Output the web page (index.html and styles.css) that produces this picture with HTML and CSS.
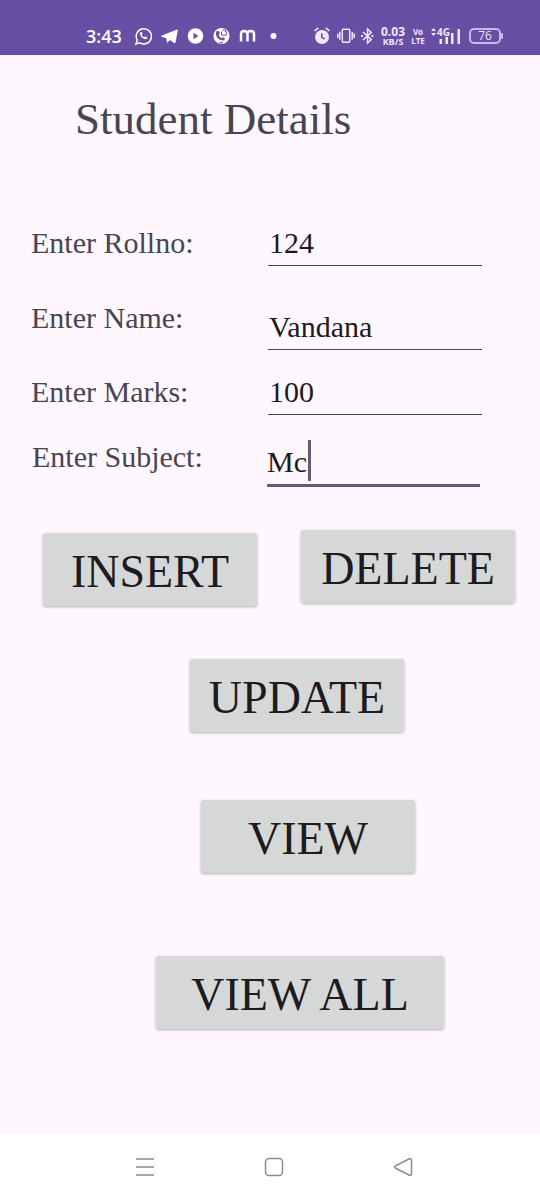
FILE: index.html
```html
<!DOCTYPE html>
<html lang="en">
<head>
<meta charset="utf-8">
<meta name="viewport" content="width=device-width, initial-scale=1">
<title>Student Details</title>
<link rel="stylesheet" href="styles.css">
</head>
<body>
<header class="status">
  <div class="status-group">
    <time class="clock">3:43</time>
    <svg class="icon" width="17" height="18" viewBox="0 0 17 18" fill="none" stroke="currentColor" stroke-width="1.5"><path d="M1 17l1.2-4A7.6 7.6 0 1 1 5 15.9z"/><path d="M5.8 5c-1.6 1.400-.5 3.700 1 5.200s4 2.700 5.300 1.200l.2-1-2-1.100-1 1C8 9.900 7 8.900 6.700 7.800l.9-.9L6.800 5z" fill="currentColor" stroke="none"/></svg>
    <svg class="icon" width="17" height="18" viewBox="0 0 17 18" fill="currentColor"><path d="M.5 8.800L16 2.500c.6-.2.900.1.800.7l-2.300 12.300c-.2.800-.8.900-1.400.5L9 13l-2 2.300c-.5.400-.9.200-1-.4l-.8-3.700L.6 9.700c-.5-.3-.5-.7-.1-.9zM6 11.200l7.500-5.700L7 12z"/></svg>
    <svg class="icon" width="17" height="18" viewBox="0 0 17 18"><circle cx="8.500" cy="9" r="7.800" fill="currentColor"/><path d="M6.500 5.800l5 3.200-5 3.200z" fill="#6750a4"/></svg>
    <svg class="icon" width="17" height="18" viewBox="0 0 17 18"><circle cx="8.500" cy="9" r="8" fill="currentColor"/><path d="M3.500 4.200c-1.700 3 .2 6.500 3.200 8.400 2 1.200 4.400 1.200 5.600-.8l-2.400-1.600-1.600 1C6.800 10.200 6 9 5.700 7.800l1.200-1.200-1-2.700z" fill="#6750a4"/><path d="M8.500 4.500v3.700h4.800V4.500M9.500 3h3v2M6 15.700h4" fill="none" stroke="#6750a4"/></svg>
    <svg class="icon" width="17" height="18" viewBox="0 0 17 18" fill="none" stroke="currentColor" stroke-width="2.500"><path d="M2 14.500V7Q2 4 5 4T8.500 7V14.500M8.500 7Q8.500 4 11.700 4T15 7V14.500"/></svg>
    <svg class="icon" width="17" height="18" viewBox="0 0 17 18"><circle cx="8.500" cy="9" r="3" fill="currentColor"/></svg>
  </div>
  <div class="status-group system">
    <svg class="icon" width="17" height="18" viewBox="0 0 17 18"><circle cx="8" cy="10" r="7" fill="currentColor"/><path d="M.6 4L4.200 .9M11.800 .9l3.600 3.100" stroke="currentColor" stroke-width="1.600"/><path d="M7.800 6.300v4l2.800 1.700" fill="none" stroke="#6750a4" stroke-width="1.500"/></svg>
    <svg class="icon" width="18" height="18" viewBox="0 0 18 18" fill="none" stroke="currentColor" stroke-width="1.500"><rect x="5.300" y="2.300" width="7.400" height="13" rx="1"/><path d="M2.800 4.800v8M15.200 4.800v8M.8 6.500v4.500M17.200 6.500v4.500"/></svg>
    <svg class="icon" width="13" height="18" viewBox="0 0 13 18" fill="none" stroke="currentColor" stroke-width="1.500"><path d="M2 5l8.300 7.600L6.500 16V2l3.800 3.400L2 13"/><path d="M0 9h2M10.500 9h2" stroke-width="1.800"/></svg>
    <div class="stack speed"><span class="speed-value">0.03</span><span>KB/S</span></div>
    <div class="stack volte"><span>Vo</span><span>LTE</span></div>
    <div class="signal">
      <svg class="icon" width="31" height="18" viewBox="0 0 31 18" fill="currentColor"><path d="M1 4l2.500-3L6 4zM1 6h5L3.500 9zM9.500 12H12v5H9.500zM15.500 10H18v7h-2.500zM21 6h2.500v11H21zM27.500 2H30v15h-2.500z"/></svg>
      <span class="network">4G</span>
    </div>
    <div class="battery"><span class="charge">76</span></div>
  </div>
</header>

<main class="screen">
  <h1 class="title">Student Details</h1>
  <form class="form">
    <div class="row row-first">
      <label for="rollno">Enter Rollno:</label>
      <div class="field"><input class="input" id="rollno" type="text" inputmode="numeric" value="124"></div>
    </div>
    <div class="row">
      <label for="name">Enter Name:</label>
      <div class="field field-low"><input class="input" id="name" type="text" value="Vandana"></div>
    </div>
    <div class="row">
      <label for="marks">Enter Marks:</label>
      <div class="field"><input class="input" id="marks" type="text" inputmode="numeric" value="100"></div>
    </div>
    <div class="row row-active">
      <label for="subject">Enter Subject:</label>
      <div class="field field-active"><input class="input input-active" id="subject" type="text" value="Mc"><span class="caret"></span></div>
    </div>
    <div class="actions">
      <button class="button insert" type="button">INSERT</button>
      <button class="button" type="button">DELETE</button>
    </div>
    <button class="button update" type="button">UPDATE</button>
    <button class="button view" type="button">VIEW</button>
    <button class="button view-all" type="button">VIEW ALL</button>
  </form>
</main>

<nav class="nav" aria-label="System navigation">
  <button class="nav-button" type="button" aria-label="Recent apps"><svg class="icon" width="24" height="24" viewBox="0 0 24 24"><path d="M3 4h18M3 12h18M3 20h18"/></svg></button>
  <button class="nav-button" type="button" aria-label="Home"><svg class="icon" width="24" height="24" viewBox="0 0 24 24"><rect x="3.500" y="3.500" width="17" height="17" rx="3.500"/></svg></button>
  <button class="nav-button" type="button" aria-label="Back"><svg class="icon" width="24" height="24" viewBox="0 0 24 24"><path d="M4.300 11L18.500 3.800Q20.500 3.300 20.500 5.300V18.700Q20.500 20.700 18.500 20.200L4.300 13Q3 12 4.300 11z"/></svg></button>
</nav>
</body>
</html>
```

FILE: styles.css
```css
* {
  box-sizing: border-box;
}

body {
  margin: 0;
  min-height: 100vh;
  display: flex;
  flex-direction: column;
  background: #fef7ff;
  color: #49454f;
  font-family: "Baskerville", "Liberation Serif", serif;
}

.icon {
  display: block;
  flex: none;
}

.status {
  display: flex;
  justify-content: space-between;
  align-items: center;
  height: 55px;
  padding: 17px 37px 0 86px;
  background: #6750a4;
  color: #ffffff;
  font-family: "Open Sans", sans-serif;
}

.status-group {
  display: flex;
  align-items: center;
  gap: 9px;
}

.system {
  gap: 6px;
  color: #f0e6ff;
}

.clock {
  width: 40px;
  font-size: 18px;
  line-height: 20px;
  font-weight: 600;
}

.stack {
  display: flex;
  flex-direction: column;
  align-items: center;
  font-size: 9px;
  line-height: 8px;
  font-weight: 700;
}

.speed {
  width: 26px;
}

.speed-value {
  font-size: 12px;
  line-height: 12px;
}

.volte {
  width: 12px;
  font-size: 8px;
  line-height: 9px;
}

.signal {
  position: relative;
}

.network {
  position: absolute;
  top: 0;
  left: 7px;
  font-size: 10px;
  line-height: 10px;
  font-weight: 700;
}

.battery {
  position: relative;
  width: 32px;
  height: 16px;
  margin: 0 2px;
  border: 2px solid #cbb8ef;
  border-radius: 5px;
  text-align: center;
}

.battery::after {
  content: "";
  position: absolute;
  top: 3px;
  right: -4px;
  width: 2px;
  height: 6px;
  border-radius: 1px;
  background: #cbb8ef;
}

.charge {
  display: block;
  font-size: 12px;
  line-height: 12px;
}

.screen {
  flex: 1;
  padding: 39px 0 40px;
}

.title {
  margin: 0 0 82px;
  padding-left: 75px;
  font-size: 45px;
  line-height: 50px;
  font-weight: 400;
}

.row {
  display: grid;
  grid-template-columns: 237px 1fr;
  align-items: start;
  margin-bottom: 25px;
  padding: 0 58px 0 31px;
  font-size: 30px;
  line-height: 34px;
}

.row-first {
  margin-bottom: 35px;
}

.row-active {
  grid-template-columns: 235px 1fr;
  padding: 0 60px 0 32px;
  margin-bottom: 43px;
}

.field-low {
  padding-top: 9px;
}

.field-active {
  position: relative;
  margin-top: 5px;
}

.input {
  display: block;
  width: 100%;
  height: 40px;
  padding: 0 0 5px 1px;
  border: 0;
  border-bottom: 1px solid #49454f;
  border-radius: 0;
  background: transparent;
  color: #1d1b20;
  font: inherit;
  outline: 0;
}

.input-active {
  height: 42px;
  padding-left: 0;
  border-bottom: 3px solid #625b71;
}

.caret {
  position: absolute;
  top: -5px;
  left: 41px;
  width: 3px;
  height: 41px;
  background: #625b71;
}

.actions {
  display: flex;
  justify-content: space-between;
  align-items: flex-start;
  padding: 0 25px 0 43px;
}

.button {
  display: block;
  width: 214px;
  height: 73px;
  padding: 5px 0 0;
  border: 0;
  border-radius: 3px;
  background: #d6d8d7;
  box-shadow: 0 1px 3px rgba(0, 0, 0, 0.3);
  color: #1d1b20;
  font-family: inherit;
  font-size: 46px;
  line-height: 50px;
}

.insert {
  margin-top: 3px;
}

.update {
  margin: 53px 0 0 190px;
}

.view {
  margin: 68px 0 0 201px;
}

.view-all {
  width: 288px;
  margin: 83px 0 0 156px;
}

.nav {
  display: flex;
  justify-content: center;
  align-items: center;
  gap: 105px;
  height: 66px;
  padding-left: 8px;
  background: #ffffff;
}

.nav-button {
  padding: 0;
  border: 0;
  background: none;
  color: #8c8c8c;
}

.nav-button .icon {
  fill: none;
  stroke: currentColor;
  stroke-width: 1.5;
}
```
